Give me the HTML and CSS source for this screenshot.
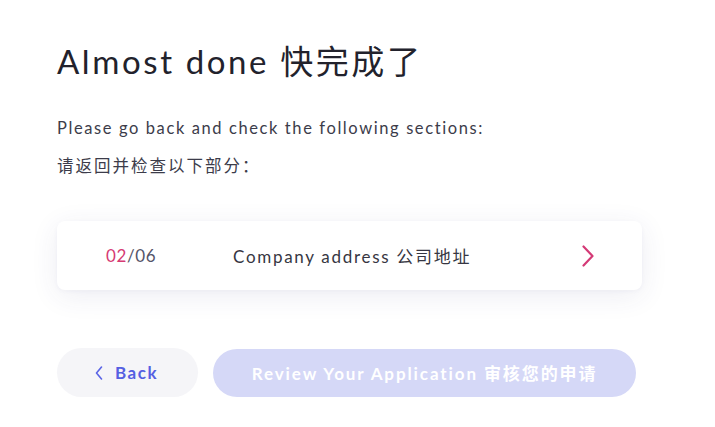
FILE: index.html
```html
<!DOCTYPE html>
<html lang="en">
<head>
<meta charset="utf-8">
<link rel="stylesheet" href="styles.css">
</head>
<body>
<main class="page">
  <h1 class="title">Almost done 快完成了</h1>
  <p class="lead">Please go back and check the following sections:</p>
  <p class="lead lead-cn">请返回并检查以下部分：</p>
  <a class="section-card" href="#">
    <span class="step"><span class="step-current">02</span>/06</span>
    <span class="section-name">Company address 公司地址</span>
    <svg class="chevron" width="12" height="22" viewBox="0 0 12 22"><path d="M1.5 1.5 L10.5 11 L1.5 20.5" fill="none" stroke="#d43a76" stroke-width="2.2" stroke-linecap="round" stroke-linejoin="round"/></svg>
  </a>
  <div class="actions">
    <button class="btn btn-back"><svg class="back-icon" width="8" height="14" viewBox="0 0 8 14"><path d="M6.5 1 L1.5 7 L6.5 13" fill="none" stroke="#5a64e6" stroke-width="1.6" stroke-linecap="round" stroke-linejoin="round"/></svg>Back</button>
    <button class="btn btn-review" disabled>Review Your Application 审核您的申请</button>
  </div>
</main>
</body>
</html>
```
FILE: styles.css
```css
* { box-sizing: border-box; }
html, body { margin: 0; background: #ffffff; }
body {
  font-family: Lato, "Noto Sans CJK SC", sans-serif;
  color: #2a2a36;
}
.page {
  width: 715px;
  padding: 37px 73px 0 57px;
}
.title {
  margin: 0;
  font-size: 33px;
  font-weight: 400;
  letter-spacing: 2.6px;
  line-height: 48px;
  color: #22222c;
}
.lead {
  margin: 0;
  font-size: 16.5px;
  line-height: 22px;
  letter-spacing: 1.6px;
  color: #3c3c4a;
}
.title + .lead { margin-top: 32px; }
.lead-cn { margin-top: 16px; letter-spacing: 2px; }
.section-card {
  margin-top: 44px;
  height: 69px;
  display: flex;
  align-items: center;
  padding: 0 48px 0 49px;
  background: #fff;
  border-radius: 8px;
  box-shadow: 0 6px 28px rgba(60, 60, 120, 0.09), 0 1px 4px rgba(60,60,120,0.04);
  text-decoration: none;
  color: #33333f;
}
.step {
  width: 127px;
  font-size: 17px;
  letter-spacing: 0.6px;
  color: #55556a;
}
.step-current { color: #d63a73; }
.section-name {
  flex: 1;
  font-size: 17px;
  letter-spacing: 1.7px;
  color: #363642;
}
.chevron { display: block; }
.actions {
  margin-top: 58px;
  display: flex;
  align-items: center;
  gap: 15px;
}
.btn {
  border: 0;
  font-family: Lato, "Noto Sans CJK SC", sans-serif;
  font-weight: 700;
  font-size: 17px;
  border-radius: 25px;
  display: flex;
  align-items: center;
  justify-content: center;
}
.btn-back {
  width: 141px;
  height: 49px;
  background: #f5f5f8;
  color: #5560e2;
  letter-spacing: 1.5px;
  gap: 12px;
  padding-right: 8px;
}
.back-icon { display: block; }
.btn-review {
  width: 423px;
  height: 48px;
  background: #d5d8f7;
  color: #ffffff;
  letter-spacing: 1.9px;
}
```
